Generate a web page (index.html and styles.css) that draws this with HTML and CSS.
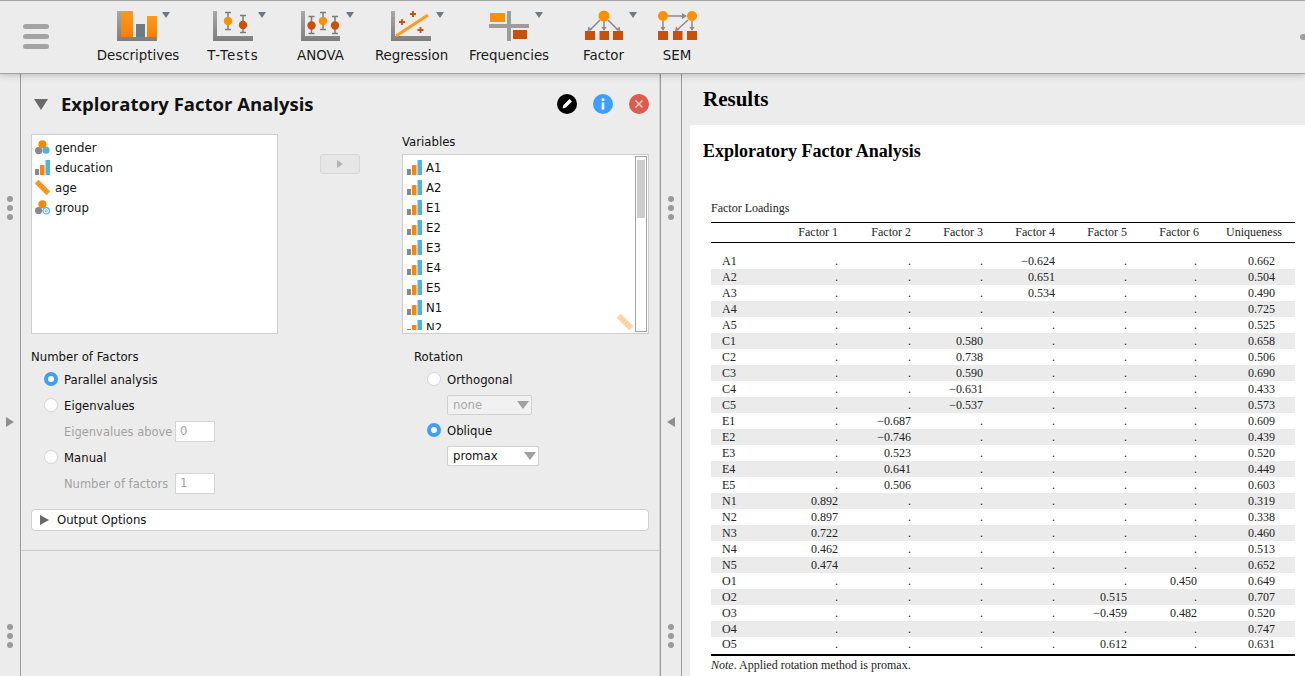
FILE: index.html
```html
<!DOCTYPE html>
<html lang="en">
<head>
<meta charset="utf-8">
<title>Exploratory Factor Analysis</title>
<link rel="stylesheet" href="styles.css">
</head>
<body>
<svg class="defs" width="0" height="0" aria-hidden="true">
  <defs>
    <symbol id="i-ord" viewBox="0 0 15 15">
      <rect x="0" y="9" width="4" height="6" fill="#85888c"/>
      <rect x="5" y="5" width="4.5" height="10" fill="#ff8600"/>
      <rect x="10.5" y="0" width="4.5" height="15" fill="#4eb3e3"/>
    </symbol>
    <symbol id="i-nom" viewBox="0 0 15 15">
      <circle cx="3.6" cy="10.6" r="3.6" fill="#85888c"/>
      <circle cx="11" cy="10.2" r="3.6" fill="#4eb3e3"/>
      <circle cx="7.4" cy="4.2" r="4" fill="#ff8600"/>
    </symbol>
    <symbol id="i-nomtext" viewBox="0 0 15 15">
      <circle cx="3.6" cy="10.6" r="3.6" fill="#85888c"/>
      <circle cx="7.4" cy="4.2" r="4" fill="#ff8600"/>
      <circle cx="11.2" cy="10.8" r="3.2" fill="#fff" stroke="#4eb3e3" stroke-width="1.2"/>
      <circle cx="11.2" cy="10.8" r="1.1" fill="none" stroke="#4eb3e3" stroke-width="0.9"/>
    </symbol>
    <symbol id="i-scale" viewBox="0 0 15 15">
      <path d="M0 3.500 L3.500 0 L15 11.500 L11.500 15 Z" fill="#ff9a1f" stroke="#f08a10" stroke-width="0.5"/>
      <path d="M3.500 5.500 L5.500 3.500 M5.500 7.500 L7.500 5.500 M7.500 9.500 L9.500 7.500 M9.500 11.500 L11.500 9.500" stroke="#d97800" stroke-width="0.8"/>
    </symbol>
    <linearGradient id="ax" x1="0" y1="0" x2="0" y2="1">
      <stop offset="0" stop-color="#a8a8a8"/>
      <stop offset="1" stop-color="#7e7e7e"/>
    </linearGradient>
    <linearGradient id="orange" x1="0" y1="0" x2="0" y2="1">
      <stop offset="0" stop-color="#ff9a1f"/>
      <stop offset="1" stop-color="#f97f00"/>
    </linearGradient>
  </defs>
</svg>

<header class="topbar">
  <div class="hamburger"><span></span><span></span><span></span></div>
  <nav class="tools">
    <div class="tool w-desc">
      <svg class="tool-icon" viewBox="88 8 100 36">
        <path d="M117 11h4v26h36v4h-40z" fill="url(#ax)"/>
        <rect x="121" y="11" width="12" height="26" fill="url(#orange)"/>
        <rect x="136" y="24" width="9" height="13" fill="#6f7a85"/>
        <rect x="147" y="16" width="10" height="21" fill="url(#orange)"/>
        <path d="M162 12h8l-4 6z" fill="#6d7a85"/>
      </svg>
      <span class="tool-label">Descriptives</span>
    </div>
    <div class="tool w-ttest">
      <svg class="tool-icon" viewBox="188 8 90 36">
        <path d="M213 11h4v25h36v5h-40z" fill="url(#ax)"/>
        <path d="M228 12.500v17M225 12.500h6M225 29.500h6M243 15.500v17M240 15.500h6M240 32.500h6" stroke="#7b7b7b" stroke-width="1.500" fill="none"/>
        <circle cx="228" cy="21" r="4.200" fill="#ff9000"/>
        <circle cx="243" cy="25" r="4.200" fill="#c8500a"/>
        <path d="M258 12h8l-4 6z" fill="#6d7a85"/>
      </svg>
      <span class="tool-label">T-Tests</span>
    </div>
    <div class="tool w-anova">
      <svg class="tool-icon" viewBox="278 8 85 36">
        <path d="M301 11h4v25h35v5h-39z" fill="url(#ax)"/>
        <path d="M311.500 16.500v17M308.500 16.500h6M308.500 33.500h6M323 12.500v17M320 12.500h6M320 29.500h6M335 16.500v17M332 16.500h6M332 33.500h6" stroke="#7b7b7b" stroke-width="1.500" fill="none"/>
        <circle cx="311.500" cy="25.500" r="4.200" fill="#c8500a"/>
        <circle cx="323" cy="21" r="4.200" fill="#ff9000"/>
        <circle cx="335" cy="25.500" r="4.200" fill="#c8500a"/>
        <path d="M346 12h8l-4 6z" fill="#6d7a85"/>
      </svg>
      <span class="tool-label">ANOVA</span>
    </div>
    <div class="tool w-reg">
      <svg class="tool-icon" viewBox="363 8 97 36">
        <path d="M391 11h4v25h36v5h-40z" fill="url(#ax)"/>
        <path d="M396 36L428 15" stroke="#ff9a1f" stroke-width="3"/>
        <path d="M402 19v6M399 22h6M413 11v6M410 14h6M420.500 27v6M417.500 30h6" stroke="#c8500a" stroke-width="1.800"/>
        <path d="M436 12h8l-4 6z" fill="#6d7a85"/>
      </svg>
      <span class="tool-label">Regression</span>
    </div>
    <div class="tool w-freq">
      <svg class="tool-icon" viewBox="460 8 98 36">
        <rect x="507" y="11" width="4" height="30" fill="#9c9c9c"/>
        <rect x="489" y="24" width="40" height="4" fill="#9c9c9c"/>
        <rect x="490" y="13" width="15" height="9" fill="#ff9000"/>
        <rect x="513" y="30" width="14" height="9" fill="#c8500a"/>
        <path d="M535 12h8l-4 6z" fill="#6d7a85"/>
      </svg>
      <span class="tool-label">Frequencies</span>
    </div>
    <div class="tool w-factor">
      <svg class="tool-icon" viewBox="558 8 91 36">
        <path d="M600 20L590 30M604 21v9M608 20L618 30" stroke="#8a8a8a" stroke-width="1.500"/>
        <path d="M587.500 31l1-4.500 3.500 3.500zM604 31l-2.500-4h5zM620.500 31l-1-4.500-3.500 3.500z" fill="#8a8a8a"/>
        <circle cx="604" cy="16" r="5.500" fill="#ff9000"/>
        <rect x="585" y="31" width="10" height="9" fill="#c8500a"/>
        <rect x="599.500" y="31" width="9.500" height="9" fill="#c8500a"/>
        <rect x="613" y="31" width="10" height="9" fill="#c8500a"/>
        <path d="M629 12h8l-4 6z" fill="#6d7a85"/>
      </svg>
      <span class="tool-label">Factor</span>
    </div>
    <div class="tool w-sem">
      <svg class="tool-icon" viewBox="649 8 56 36">
        <path d="M668 16h17M663 21v9M688 20L677 30M692 21v9" stroke="#8a8a8a" stroke-width="1.500"/>
        <path d="M687 16l-5-3v6zM663 31l-2.500-4h5zM675 31l1-4.500 3.500 3.500zM692 31l-2.500-4h5z" fill="#8a8a8a"/>
        <circle cx="663" cy="16" r="5" fill="#ff9000"/>
        <circle cx="692" cy="16" r="5" fill="#ff9000"/>
        <rect x="658" y="31" width="10" height="9" fill="#c8500a"/>
        <rect x="673" y="31" width="9.500" height="9" fill="#c8500a"/>
        <rect x="687" y="31" width="10" height="9" fill="#c8500a"/>
      </svg>
      <span class="tool-label">SEM</span>
    </div>
  </nav>
  <div class="edge-mark"></div>
</header>

<main class="workspace">
  <div class="handle handle-left">
    <div class="dots"><i></i><i></i><i></i></div>
    <div class="arrow arrow-right"></div>
    <div class="dots"><i></i><i></i><i></i></div>
  </div>

  <section class="analysis">
    <div class="panel">
      <div class="panel-head">
        <div class="collapse-tri"></div>
        <h2 class="panel-title">Exploratory Factor Analysis</h2>
        <div class="head-btns">
          <span class="round round-edit">
            <svg width="20" height="20" viewBox="0 0 20 20"><path d="M5.500 14.500l1-3.500 6-6 2.500 2.500-6 6z" fill="#fff"/></svg>
          </span>
          <span class="round round-info">
            <svg width="20" height="20" viewBox="0 0 20 20"><rect x="8.700" y="8.500" width="2.600" height="7" fill="#fff"/><rect x="8.700" y="4.500" width="2.600" height="2.600" fill="#fff"/></svg>
          </span>
          <span class="round round-close">
            <svg width="20" height="20" viewBox="0 0 20 20"><path d="M6.500 6.500l7 7M13.500 6.500l-7 7" stroke="#f6d5cf" stroke-width="1.400"/></svg>
          </span>
        </div>
      </div>

      <div class="assign">
        <div class="listbox listbox-source">
          <div class="var"><svg class="vi"><use href="#i-nom"/></svg>gender</div>
          <div class="var"><svg class="vi"><use href="#i-ord"/></svg>education</div>
          <div class="var"><svg class="vi"><use href="#i-scale"/></svg>age</div>
          <div class="var"><svg class="vi"><use href="#i-nomtext"/></svg>group</div>
        </div>
        <div class="mover"><div class="move-btn"><span class="move-tri"></span></div></div>
        <div class="target">
          <div class="target-label">Variables</div>
          <div class="listbox listbox-target">
            <div class="var"><svg class="vi"><use href="#i-ord"/></svg>A1</div>
            <div class="var"><svg class="vi"><use href="#i-ord"/></svg>A2</div>
            <div class="var"><svg class="vi"><use href="#i-ord"/></svg>E1</div>
            <div class="var"><svg class="vi"><use href="#i-ord"/></svg>E2</div>
            <div class="var"><svg class="vi"><use href="#i-ord"/></svg>E3</div>
            <div class="var"><svg class="vi"><use href="#i-ord"/></svg>E4</div>
            <div class="var"><svg class="vi"><use href="#i-ord"/></svg>E5</div>
            <div class="var"><svg class="vi"><use href="#i-ord"/></svg>N1</div>
            <div class="var"><svg class="vi"><use href="#i-ord"/></svg>N2</div>
            <div class="scrollbar"><div class="thumb"></div></div>
            <svg class="ghost-ruler"><use href="#i-scale"/></svg>
          </div>
        </div>
      </div>

      <div class="options">
        <div class="opt-col opt-factors">
          <div class="group-title">Number of Factors</div>
          <div class="row radio-row"><span class="radio on"></span>Parallel analysis</div>
          <div class="row radio-row"><span class="radio"></span>Eigenvalues</div>
          <div class="row sub-row"><span class="muted">Eigenvalues above</span><span class="numbox">0</span></div>
          <div class="row radio-row"><span class="radio"></span>Manual</div>
          <div class="row sub-row"><span class="muted">Number of factors</span><span class="numbox">1</span></div>
        </div>
        <div class="opt-col opt-rotation">
          <div class="group-title">Rotation</div>
          <div class="row radio-row"><span class="radio"></span>Orthogonal</div>
          <div class="row select-row"><span class="select select-off">none<i class="sel-tri"></i></span></div>
          <div class="row radio-row"><span class="radio on"></span>Oblique</div>
          <div class="row select-row"><span class="select select-on">promax<i class="sel-tri"></i></span></div>
        </div>
      </div>

      <div class="output-options"><span class="oo-tri"></span>Output Options</div>
    </div>
  </section>

  <div class="handle handle-right">
    <div class="dots"><i></i><i></i><i></i></div>
    <div class="arrow arrow-left"></div>
    <div class="dots"><i></i><i></i><i></i></div>
  </div>

  <section class="results">
    <h1 class="results-title">Results</h1>
    <div class="sheet">
      <h2 class="sheet-title">Exploratory Factor Analysis</h2>
      <div class="table-caption">Factor Loadings</div>
      <table class="loadings">
        <thead>
          <tr><th class="c-name"></th><th>Factor 1</th><th class="c-f2">Factor 2</th><th>Factor 3</th><th>Factor 4</th><th>Factor 5</th><th>Factor 6</th><th class="c-uniq">Uniqueness</th></tr>
        </thead>
        <tbody>
          <tr><td>A1</td><td>.</td><td>.</td><td>.</td><td>−0.624</td><td>.</td><td>.</td><td>0.662</td></tr>
          <tr><td>A2</td><td>.</td><td>.</td><td>.</td><td>0.651</td><td>.</td><td>.</td><td>0.504</td></tr>
          <tr><td>A3</td><td>.</td><td>.</td><td>.</td><td>0.534</td><td>.</td><td>.</td><td>0.490</td></tr>
          <tr><td>A4</td><td>.</td><td>.</td><td>.</td><td>.</td><td>.</td><td>.</td><td>0.725</td></tr>
          <tr><td>A5</td><td>.</td><td>.</td><td>.</td><td>.</td><td>.</td><td>.</td><td>0.525</td></tr>
          <tr><td>C1</td><td>.</td><td>.</td><td>0.580</td><td>.</td><td>.</td><td>.</td><td>0.658</td></tr>
          <tr><td>C2</td><td>.</td><td>.</td><td>0.738</td><td>.</td><td>.</td><td>.</td><td>0.506</td></tr>
          <tr><td>C3</td><td>.</td><td>.</td><td>0.590</td><td>.</td><td>.</td><td>.</td><td>0.690</td></tr>
          <tr><td>C4</td><td>.</td><td>.</td><td>−0.631</td><td>.</td><td>.</td><td>.</td><td>0.433</td></tr>
          <tr><td>C5</td><td>.</td><td>.</td><td>−0.537</td><td>.</td><td>.</td><td>.</td><td>0.573</td></tr>
          <tr><td>E1</td><td>.</td><td>−0.687</td><td>.</td><td>.</td><td>.</td><td>.</td><td>0.609</td></tr>
          <tr><td>E2</td><td>.</td><td>−0.746</td><td>.</td><td>.</td><td>.</td><td>.</td><td>0.439</td></tr>
          <tr><td>E3</td><td>.</td><td>0.523</td><td>.</td><td>.</td><td>.</td><td>.</td><td>0.520</td></tr>
          <tr><td>E4</td><td>.</td><td>0.641</td><td>.</td><td>.</td><td>.</td><td>.</td><td>0.449</td></tr>
          <tr><td>E5</td><td>.</td><td>0.506</td><td>.</td><td>.</td><td>.</td><td>.</td><td>0.603</td></tr>
          <tr><td>N1</td><td>0.892</td><td>.</td><td>.</td><td>.</td><td>.</td><td>.</td><td>0.319</td></tr>
          <tr><td>N2</td><td>0.897</td><td>.</td><td>.</td><td>.</td><td>.</td><td>.</td><td>0.338</td></tr>
          <tr><td>N3</td><td>0.722</td><td>.</td><td>.</td><td>.</td><td>.</td><td>.</td><td>0.460</td></tr>
          <tr><td>N4</td><td>0.462</td><td>.</td><td>.</td><td>.</td><td>.</td><td>.</td><td>0.513</td></tr>
          <tr><td>N5</td><td>0.474</td><td>.</td><td>.</td><td>.</td><td>.</td><td>.</td><td>0.652</td></tr>
          <tr><td>O1</td><td>.</td><td>.</td><td>.</td><td>.</td><td>.</td><td>0.450</td><td>0.649</td></tr>
          <tr><td>O2</td><td>.</td><td>.</td><td>.</td><td>.</td><td>0.515</td><td>.</td><td>0.707</td></tr>
          <tr><td>O3</td><td>.</td><td>.</td><td>.</td><td>.</td><td>−0.459</td><td>0.482</td><td>0.520</td></tr>
          <tr><td>O4</td><td>.</td><td>.</td><td>.</td><td>.</td><td>.</td><td>.</td><td>0.747</td></tr>
          <tr><td>O5</td><td>.</td><td>.</td><td>.</td><td>.</td><td>0.612</td><td>.</td><td>0.631</td></tr>
        </tbody>
      </table>
      <div class="table-note"><em>Note</em>. Applied rotation method is promax.</div>
    </div>
  </section>
</main>
</body>
</html>
```

FILE: styles.css
```css
* { box-sizing: border-box; }

html, body {
  margin: 0;
  height: 100%;
  overflow: hidden;
}

body {
  display: flex;
  flex-direction: column;
  width: 1305px;
  height: 676px;
  background: #ececec;
  color: #111;
  font-family: "DejaVu Sans", sans-serif;
  font-size: 12px;
}

.defs { position: absolute; }

/* Top ribbon */
.topbar {
  position: relative;
  z-index: 2;
  flex: 0 0 74px;
  display: flex;
  background: #ececec;
  border-top: 1px solid #a4a4a4;
  border-bottom: 1px solid #a0a0a0;
  box-shadow: 0 1px 7px rgba(0, 0, 0, 0.22);
}

.hamburger {
  flex: 0 0 88px;
  padding: 23px 0 0 23px;
  display: flex;
  flex-direction: column;
  gap: 5px;
}

.hamburger span {
  display: block;
  width: 26px;
  height: 5px;
  border-radius: 3px;
  background: #a3a3a3;
}

.tools { display: flex; }

.tool {
  display: flex;
  flex-direction: column;
  align-items: stretch;
  padding-top: 7px;
}

.w-desc { width: 100px; }
.w-ttest { width: 90px; }
.w-anova { width: 85px; }
.w-reg { width: 97px; }
.w-freq { width: 98px; }
.w-factor { width: 91px; }
.w-sem { width: 56px; }

.tool-icon {
  display: block;
  width: 100%;
  height: 36px;
}

.tool-label {
  margin-top: 3px;
  text-align: center;
  font-size: 13.400px;
  line-height: 18px;
  color: #1a1a1a;
}

.w-ttest .tool-label { letter-spacing: 1.100px; }

.edge-mark {
  position: absolute;
  right: 0;
  top: 33px;
  width: 5px;
  height: 6px;
  border-radius: 3px 0 0 3px;
  background: #9d9d9d;
}

/* Workspace */
.workspace {
  flex: 1;
  display: flex;
  min-height: 0;
}

.handle {
  display: flex;
  flex-direction: column;
  align-items: center;
  justify-content: space-between;
  padding: 122px 0 28px;
  background: #ececec;
}

.handle-left {
  flex: 0 0 21px;
  border-right: 1px solid #9b9b9b;
  padding-right: 1px;
}

.handle-right {
  flex: 0 0 22px;
  border-left: 1px solid #9b9b9b;
  border-right: 1px solid #9b9b9b;
}

.dots {
  display: flex;
  flex-direction: column;
  gap: 3px;
}

.dots i {
  display: block;
  width: 6px;
  height: 6px;
  border-radius: 50%;
  background: #9a9a9a;
}

.arrow {
  width: 0;
  height: 0;
  border-top: 5px solid transparent;
  border-bottom: 5px solid transparent;
}

.arrow-right { border-left: 8px solid #8f8f8f; }
.arrow-left { border-right: 8px solid #8f8f8f; }

/* Analysis form */
.analysis {
  flex: 0 0 639px;
  border-right: 1px solid #d2d2d2;
  background: #ececec;
}

.panel {
  height: 477px;
  padding: 0 10px;
  border-bottom: 1px solid #cacaca;
}

.panel-head {
  height: 60px;
  display: flex;
  align-items: center;
  padding: 0 0 0 3px;
}

.collapse-tri {
  width: 0;
  height: 0;
  border-left: 7px solid transparent;
  border-right: 7px solid transparent;
  border-top: 11px solid #6a6a6a;
}

.panel-title {
  margin: 0 0 2px 13px;
  font-family: "Open Sans", "DejaVu Sans", sans-serif;
  font-size: 18.500px;
  font-weight: 700;
  color: #111;
}

.head-btns {
  margin-left: auto;
  display: flex;
  gap: 16px;
}

.round {
  width: 20px;
  height: 20px;
  border-radius: 50%;
  display: block;
}

.round svg { display: block; }
.round-edit { background: #000; }
.round-info { background: #3f9dfb; }
.round-close { background: #dd5b4c; }

.assign {
  display: flex;
  height: 200px;
}

.listbox {
  position: relative;
  width: 247px;
  background: #fff;
  border: 1px solid #cdcdcd;
  overflow: hidden;
}

.listbox-source {
  height: 200px;
  padding: 2px 0 0 3px;
}

.listbox-target {
  height: 180px;
  padding: 2px 0 0 4px;
}

.listbox-target::after {
  content: "";
  position: absolute;
  left: 0;
  right: 14px;
  bottom: 0;
  height: 3px;
  background: #fff;
}

.var {
  display: flex;
  align-items: center;
  height: 20px;
  padding-top: 2px;
  font-size: 11.700px;
  color: #111;
}

.vi {
  flex: none;
  width: 15px;
  height: 15px;
  margin: -2px 5px 0 0;
}

.listbox-target .vi { margin-right: 4px; }

.mover {
  flex: 0 0 124px;
  padding: 20px 0 0 42px;
}

.move-btn {
  width: 40px;
  height: 20px;
  display: flex;
  align-items: center;
  justify-content: center;
  background: #e6e6e6;
  border: 1px solid #d8d8d8;
  border-radius: 3px;
}

.move-tri {
  width: 0;
  height: 0;
  border-left: 6px solid #b4b4b4;
  border-top: 4px solid transparent;
  border-bottom: 4px solid transparent;
}

.target-label {
  height: 20px;
  line-height: 17px;
  font-size: 11.700px;
}

.scrollbar {
  position: absolute;
  top: 1px;
  right: 1px;
  bottom: 1px;
  width: 12px;
  padding: 3px 1px;
  border: 1px solid #a2a2a2;
  background: #fff;
}

.thumb {
  height: 58px;
  background: #cdcdcd;
}

.ghost-ruler {
  position: absolute;
  right: 15px;
  bottom: 3px;
  width: 16px;
  height: 16px;
  opacity: 0.4;
}

.options {
  display: flex;
  padding-top: 14px;
  height: 175px;
}

.opt-col { display: flex; flex-direction: column; }
.opt-factors { flex: 0 0 383px; }
.opt-rotation { flex: 1; }

.group-title {
  height: 18px;
  line-height: 19px;
  font-size: 11.700px;
}

.row {
  display: flex;
  align-items: center;
  font-size: 11.700px;
}

.radio-row {
  height: 26px;
  padding: 2px 0 0 13px;
}

.radio {
  flex: none;
  width: 14px;
  height: 14px;
  margin: -2px 6px 0 0;
  border-radius: 50%;
  background: #fff;
  border: 1px solid #d4d4d4;
}

.radio.on {
  border: 4px solid #3f9dfb;
}

.sub-row {
  height: 26px;
  padding-left: 33px;
}

.muted {
  flex: 0 0 111px;
  min-width: 0;
  padding-top: 2px;
  font-size: 11.500px;
  color: #a2a2a2;
  white-space: nowrap;
}

.numbox {
  width: 40px;
  height: 21px;
  line-height: 19px;
  padding-left: 4px;
  background: #fff;
  border: 1px solid #d4d4d4;
  color: #a2a2a2;
}

.select-row {
  height: 25px;
  padding-left: 33px;
}

.select {
  position: relative;
  display: block;
  height: 20px;
  line-height: 18px;
  padding-left: 5px;
  border: 1px solid #d0d0d0;
  border-radius: 2px;
}

.select-off { width: 85px; background: #f1f1f1; color: #a8a8a8; }
.select-on { width: 92px; background: #fff; color: #111; }

.sel-tri {
  position: absolute;
  right: 2px;
  top: 5px;
  width: 0;
  height: 0;
  border-left: 6px solid transparent;
  border-right: 6px solid transparent;
  border-top: 8px solid #a0a0a0;
}

.output-options {
  display: flex;
  align-items: center;
  height: 22px;
  width: 618px;
  background: #fff;
  border: 1px solid #d0d0d0;
  border-radius: 4px;
  padding: 0 0 1px 8px;
  font-size: 11.700px;
}

.oo-tri {
  width: 0;
  height: 0;
  margin-right: 8px;
  border-left: 9px solid #6a6a6a;
  border-top: 5px solid transparent;
  border-bottom: 5px solid transparent;
}

/* Results */
.results {
  flex: 1;
  display: flex;
  flex-direction: column;
  min-width: 0;
  padding-left: 8px;
  font-family: "Liberation Serif", serif;
  color: #000;
}

.results-title {
  margin: 0;
  height: 51px;
  padding: 12px 0 0 13px;
  font-size: 21px;
  line-height: 26px;
  font-weight: 700;
}

.sheet {
  flex: 1;
  background: #fff;
  padding: 14px 10px 0 13px;
  overflow: hidden;
}

.sheet-title {
  margin: 0;
  height: 62px;
  font-size: 18px;
  line-height: 24px;
  font-weight: 700;
}

.table-caption {
  margin-left: 8px;
  height: 21px;
  font-size: 12px;
  line-height: 15px;
  color: #222;
}

.loadings {
  margin-left: 8px;
  width: 584px;
  table-layout: fixed;
  border-collapse: collapse;
  font-size: 12px;
  color: #222;
  border-bottom: 2px solid #000;
}

.loadings thead tr {
  border-top: 1px solid #000;
  border-bottom: 1px solid #000;
}

.loadings th {
  width: 72px;
  height: 20px;
  padding: 0;
  font-weight: 400;
  text-align: right;
}

.loadings th.c-name { width: 55px; }
.loadings th.c-f2 { width: 73px; }
.loadings th.c-uniq { width: 96px; padding-right: 13px; }

.loadings tbody::before {
  content: "";
  display: block;
  height: 10px;
}

.loadings td {
  height: 16px;
  padding: 0;
  line-height: 15px;
  text-align: right;
}

.loadings td:first-child {
  text-align: left;
  padding-left: 11px;
}

.loadings td:nth-child(7) { padding-right: 2px; }
.loadings td:last-child { padding-right: 20px; }
.loadings tbody tr:nth-child(even) { background: #ebebeb; }
.loadings tbody tr:last-child td { height: 18px; vertical-align: top; }

.table-note {
  margin: 1px 0 0 8px;
  font-size: 12px;
  line-height: 16px;
  color: #222;
}
```
